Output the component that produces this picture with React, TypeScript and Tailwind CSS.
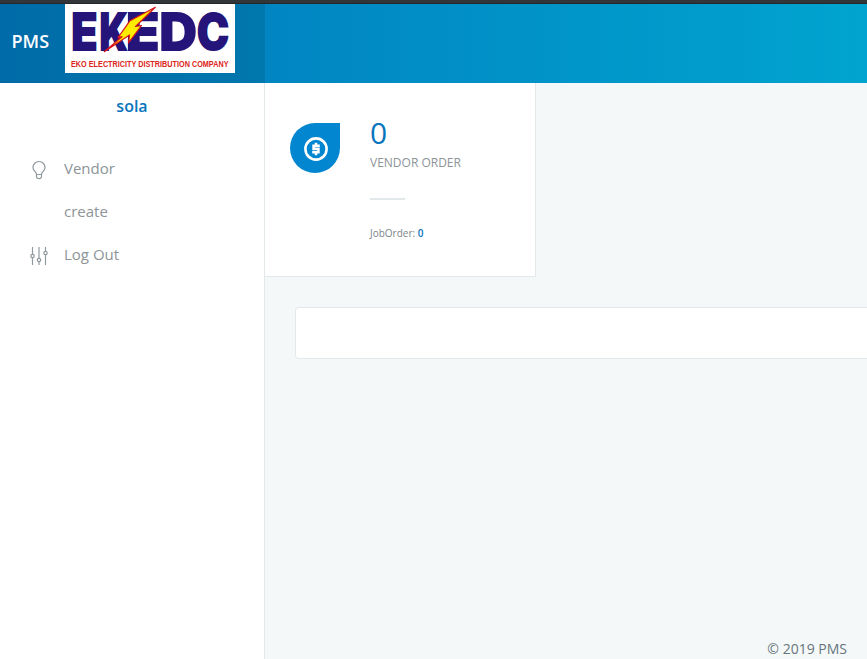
function Logo() {
  return (
    <svg width="170" height="69" viewBox="0 0 170 69" className="block overflow-visible bg-white" aria-label="EKEDC">
      <g fill="#25157a" stroke="#25157a" strokeWidth="2.2" fontFamily="Inter, sans-serif" fontWeight="800" fontSize="50.5">
        <text transform="translate(6.2 46) scale(0.85 1)">E</text>
        <text transform="translate(34.5 46) scale(0.74 1)">K</text>
        <text transform="translate(61 46) scale(1.08 1)">E</text>
        <text transform="translate(94.5 46) scale(1.02 1)">D</text>
        <text transform="translate(132 46) scale(0.85 1)">C</text>
      </g>
      <path d="M90.3 3.3 L65 16.7 L53 33.7 L57 32.7 L39.3 47.7 L64.5 31 L63.5 38.8 L76.5 21.5 L70.5 22.5 Z" fill="#ffed00" stroke="#d8141c" strokeWidth="1.2" strokeLinejoin="round" />
      <text x="6" y="63.3" textLength="157.5" lengthAdjust="spacingAndGlyphs" fill="#dc2420" fontFamily="Liberation Sans, sans-serif" fontWeight="700" fontSize="8.8">
        EKO ELECTRICITY DISTRIBUTION COMPANY
      </text>
    </svg>
  );
}

function BulbIcon() {
  return (
    <svg width="18" height="20" viewBox="0 0 18 20" fill="none" stroke="#909a9f" strokeWidth="1.2">
      <path d="M6.5 14.5C6.5 11.7 3 11 3 7.4a6 5.9 0 0 1 12 0c0 3.6-3.5 4.3-3.5 7.1zM6.5 14.5v2c0 1.3.9 2.1 2.5 2.1s2.5-.8 2.5-2.1v-2" />
    </svg>
  );
}

function SlidersIcon() {
  return (
    <svg width="18" height="20" viewBox="0 0 18 20" fill="none" stroke="#909a9f" strokeWidth="1.2">
      <path d="M2.5 1v7.3M2.5 11.7V19M9 1v11.3M9 15.7V19M15.5 1v4.3M15.5 8.7V19" />
      <circle cx="2.5" cy="10" r="1.7" />
      <circle cx="9" cy="14" r="1.7" />
      <circle cx="15.5" cy="7" r="1.7" />
    </svg>
  );
}

function CoinIcon() {
  return (
    <svg width="24" height="24" viewBox="0 0 24 24" fill="none" stroke="white">
      <circle cx="12" cy="12" r="10.6" strokeWidth="2.6" />
      <path d="M15.8 8.7H9.6v3.2h4.8v3.4H8.2M12 5.8v2.5M12 15.5v2.7" strokeWidth="2.6" />
    </svg>
  );
}

export default function App() {
  return (
    <div className="flex h-[659px] w-full flex-col overflow-hidden bg-[#f4f8f9] font-['Open_Sans',sans-serif] text-[#8d97ad]">
      <div className="h-1 shrink-0 border-b border-[#25282a] bg-[#323639]" />
      <header className="h-[79px] w-[1366px] shrink-0 bg-[linear-gradient(to_right,#0178bc,#00bdda)]">
        <div className="flex h-full w-[265px] items-start bg-black/10">
          <span className="w-[65px] pl-[11.5px] pt-[23px] text-[18px] font-semibold leading-7 text-white">PMS</span>
          <Logo />
        </div>
      </header>
      <div className="flex min-h-0 flex-1">
        <aside className="w-[265px] shrink-0 border-r border-[#e3e9eb] bg-white">
          <div className="pt-[11px] text-center text-[16px] font-semibold leading-6 text-[#0874bc]">sola</div>
          <nav className="mt-[29px] text-[15px] text-[#8d9498]">
            <div className="flex h-[43px] items-center pl-[30px]">
              <span className="w-[34px] pt-[3px]"><BulbIcon /></span>Vendor
            </div>
            <div className="flex h-[43px] items-center pl-[64px]">create</div>
            <div className="flex h-[43px] items-center pl-[30px]">
              <span className="w-[34px] pt-[3px]"><SlidersIcon /></span>Log Out
            </div>
          </nav>
        </aside>
        <main className="flex min-w-0 flex-1 flex-col">
          <section className="flex h-[194px] w-[271px] shrink-0 border-b border-r border-[#e3e9eb] bg-white pl-[25px] pt-10">
            <div className="flex size-[50px] items-center justify-center rounded-full rounded-tr-none bg-[#0386d0] pl-[2px] pt-[2px]">
              <CoinIcon />
            </div>
            <div className="pl-[30px] text-[#8d9498]">
              <div className="-mt-2 text-[30px] font-normal leading-9 text-[#0874bc]">0</div>
              <div className="mt-[3px] text-[12px] leading-[18px]">VENDOR ORDER</div>
              <div className="mt-[26px] h-[2px] w-[35px] bg-[#e3e9eb]" />
              <div className="mt-[25px] text-[10px] leading-4 text-[#7c8488]">JobOrder: <span className="font-semibold text-[#0874bc]">0</span></div>
            </div>
          </section>
          <div className="ml-[30px] mt-[30px] h-[52px] rounded-l border border-r-0 border-[#e3e9eb] bg-white" />
          <footer className="mt-auto pr-5 text-right text-[14px] leading-[21px] text-[#67757c]">© 2019 PMS</footer>
        </main>
      </div>
    </div>
  );
}
